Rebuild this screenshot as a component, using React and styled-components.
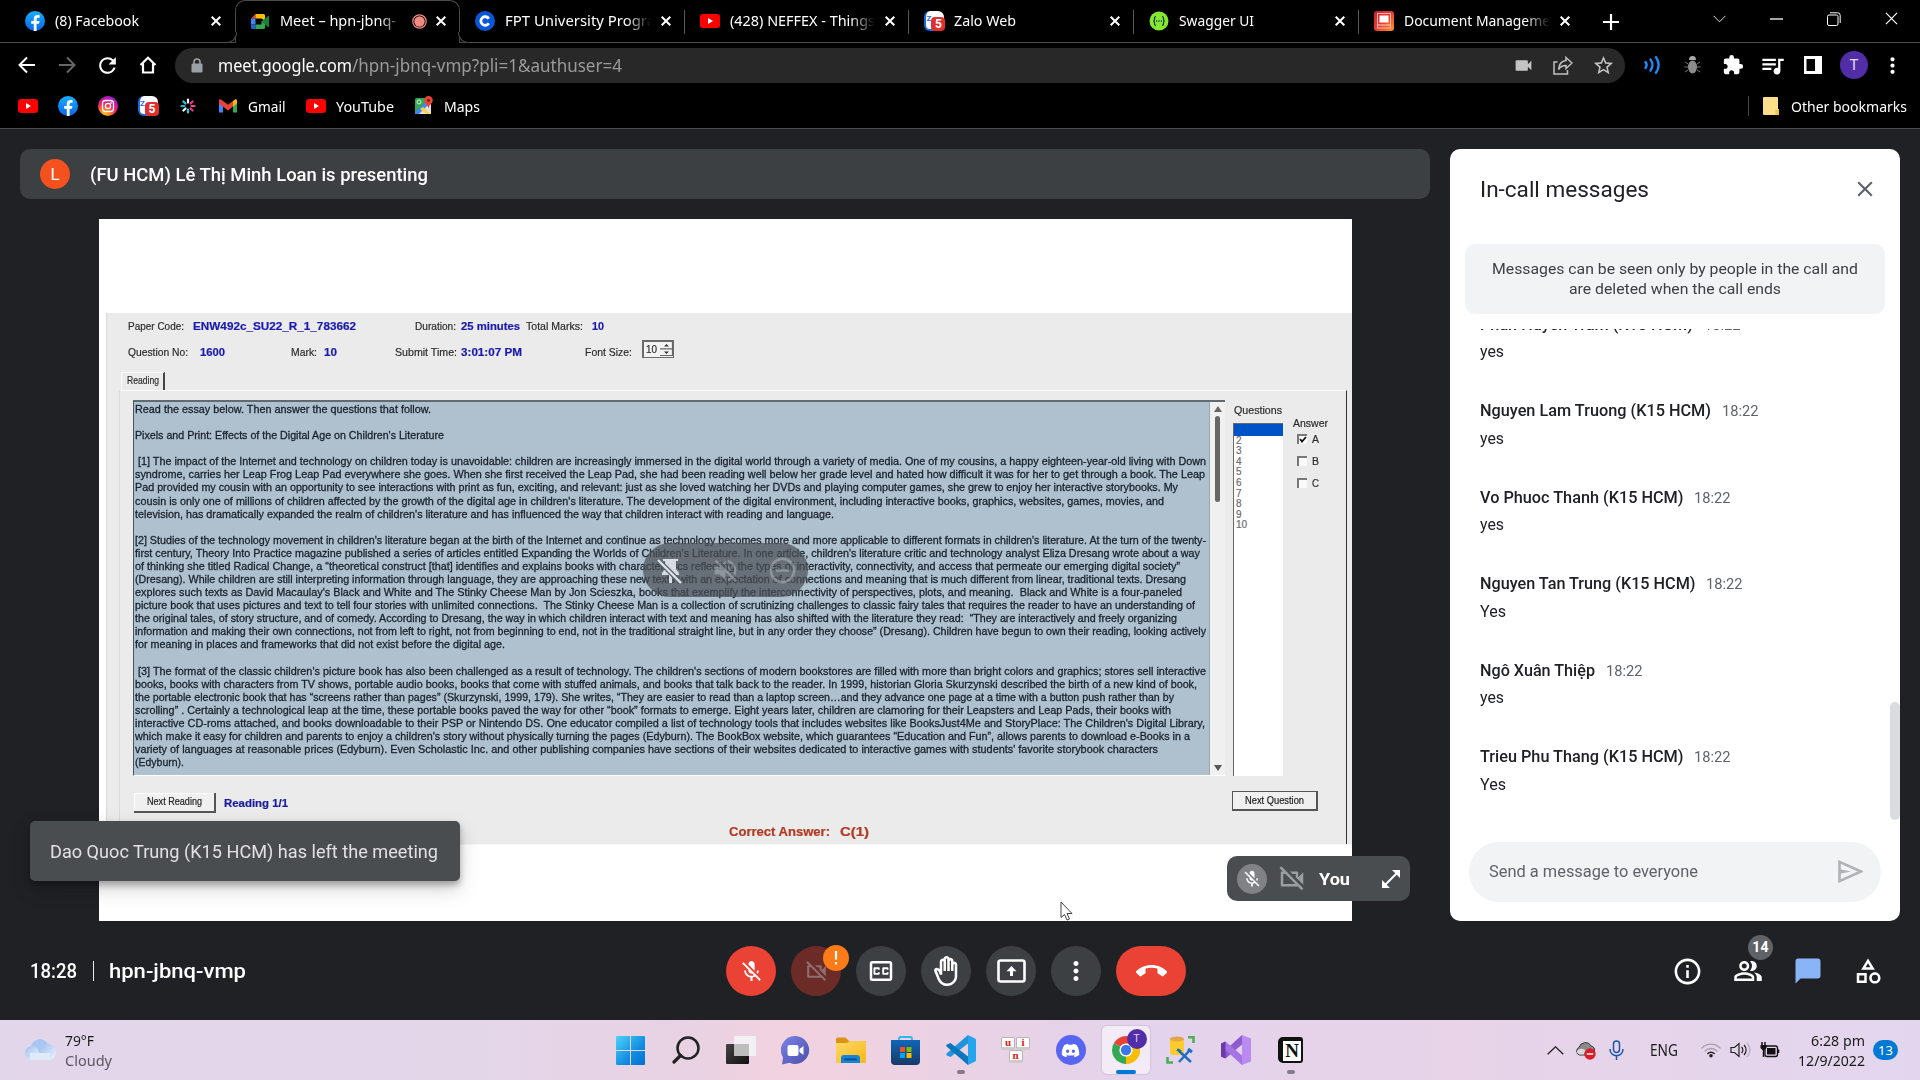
import React, { useLayoutEffect, useRef, useState } from "react";
import styled, { createGlobalStyle, css } from "styled-components";
import {
  MdMicOff, MdOutlineVideocamOff, MdOutlineClosedCaption, MdMoreVert, MdCallEnd, MdInfoOutline,
  MdOutlinePeopleAlt, MdChatBubble, MdOutlineCategory, MdExtension, MdQueueMusic, MdClose,
  MdStarBorder, MdVideocam, MdOpenInFull, MdRefresh, MdOutlineBackHand,
  MdVolumeOff, MdRemoveCircleOutline,
} from "react-icons/md";
import { FaDiscord } from "react-icons/fa";

const GlobalStyle = createGlobalStyle`
  * { box-sizing: border-box; }
  html, body { margin: 0; padding: 0; background: #202124; overflow: hidden; }
  svg { display: block; flex: none; }
`;

const ui = `"Noto Sans", "Open Sans", sans-serif`;
const roboto = `Roboto, "Noto Sans", sans-serif`;
const arial = `"Liberation Sans", Arial, sans-serif`;

/* ---------- text set to a known width ---------- */
const FitBox = styled.span`
  display: inline-block;
  flex: none;
  width: ${(p) => p.$w}px;
  margin-left: ${(p) => p.$ml || 0}px;
  white-space: pre;
  font-weight: ${(p) => (p.$bold ? 700 : "inherit")};
  color: ${(p) => p.$color || "inherit"};
`;
const FitInner = styled.span`
  display: inline-block;
  transform-origin: 0 50%;
`;
function Fit({ w, ml, bold, color, children }) {
  const ref = useRef(null);
  const [scale, setScale] = useState(1);
  useLayoutEffect(() => {
    const natural = parseFloat(getComputedStyle(ref.current).width);
    if (natural) setScale(w / natural);
  }, [w]);
  return (
    <FitBox $w={w} $ml={ml} $bold={bold} $color={color}>
      <FitInner ref={ref} style={{ transform: `scaleX(${scale})` }}>{children}</FitInner>
    </FitBox>
  );
}

/* ---------- shell ---------- */
const Screen = styled.div`
  width: 1920px;
  height: 1080px;
  display: flex;
  flex-direction: column;
  overflow: hidden;
  position: relative;
  background: #202124;
  font-family: ${ui};
`;

/* ---------- browser ---------- */
const Browser = styled.header`
  height: 129px;
  background: #000;
  color: #fff;
  border-bottom: 1px solid #4a4a4a;
  display: flex;
  flex-direction: column;
`;
const TabStrip = styled.div`
  height: 43px;
  display: flex;
  padding-left: 10px;
  box-shadow: inset 0 -1px 0 #4b4b4b;
`;
const Tab = styled.div`
  width: 224.85px;
  height: 43px;
  display: flex;
  align-items: center;
  padding: 0 9px 1px 15px;
  position: relative;
  font-size: 15px;
  ${(p) => p.$sep && css`
    &::after { content: ""; position: absolute; right: 0; top: 10px; width: 1px; height: 24px; background: #5a5a5a; }
  `}
  ${(p) => p.$active && css`
    background: #000;
    border: 1px solid #4b4b4b;
    border-bottom: 0;
    border-radius: 10px 10px 0 0;
    padding: 0 8px 2px 14px;
    &::before, &::after {
      content: ""; position: absolute; bottom: 0; width: 10px; height: 10px; background: #000;
      border-bottom: 1px solid #4b4b4b;
    }
    &::before { left: -10px; border-right: 1px solid #4b4b4b; border-bottom-right-radius: 10px; }
    &::after { right: -10px; border-left: 1px solid #4b4b4b; border-bottom-left-radius: 10px; }
  `}
`;
const TabTitle = styled.div`
  flex: 1;
  overflow: hidden;
  margin: 0 4px 0 10px;
  height: 24px;
  line-height: 22px;
  ${(p) => p.$fade && css`mask-image: linear-gradient(90deg, #000 calc(100% - 26px), transparent calc(100% - 1px));`}
`;
const TabClose = styled.div`
  width: 20px;
  display: flex;
  justify-content: center;
`;
const NewTab = styled.div`
  width: 54px;
  display: flex;
  align-items: center;
  justify-content: center;
`;
const WindowButtons = styled.div`
  margin-left: auto;
  display: flex;
  height: 37px;
  align-items: center;
  & > div { width: 57.3px; display: flex; justify-content: center; }
`;
const Toolbar = styled.div`
  height: 44px;
  display: flex;
  align-items: center;
  padding: 0 4px 0 7px;
`;
const ToolIcon = styled.div`
  width: ${(p) => p.$w || 40}px;
  flex: none;
  display: flex;
  justify-content: center;
  color: ${(p) => p.$c || "#fff"};
`;
const Omnibox = styled.div`
  width: 1450px;
  flex: none;
  height: 35px;
  border-radius: 18px;
  background: #282828;
  display: flex;
  align-items: center;
  padding: 0 2px 0 13px;
  font-size: 17.5px;
`;
const Grow = styled.div`flex: 1;`;
const Profile = styled.div`
  width: 28px;
  height: 28px;
  border-radius: 50%;
  background: #512da8;
  color: #e4dcf5;
  font: 15px/28px ${roboto};
  text-align: center;
`;
const Bookmarks = styled.div`
  height: 38px;
  display: flex;
  align-items: center;
  font-size: 15px;
  padding: 0 13px 0 18px;
`;
const Mark = styled.div`
  display: flex;
  align-items: center;
  margin-right: ${(p) => p.$mr}px;
`;
const MarkText = styled.div`
  display: flex;
  padding-bottom: 1px;
`;
const BarSep = styled.div`
  width: 1px;
  height: 20px;
  background: #4a4a4a;
  margin-right: 14px;
`;

/* ---------- meet ---------- */
const Meet = styled.main`
  height: 891px;
  display: flex;
  flex-direction: column;
  position: relative;
  background: #202124;
  font-family: ${roboto};
`;
const MeetTop = styled.div`
  display: flex;
  gap: 20px;
  padding: 20px 20px 0;
  height: 792px;
`;
const StageColumn = styled.div`
  width: 1410px;
  display: flex;
  flex-direction: column;
`;
const Presenter = styled.div`
  height: 50px;
  border-radius: 10px;
  background: #3c4043;
  color: #fff;
  display: flex;
  align-items: center;
  padding-left: 20px;
  font-size: 18px;
  font-weight: 500;
`;
const PresenterAvatar = styled.div`
  width: 30px;
  height: 30px;
  border-radius: 50%;
  background: #f4511e;
  font: 17px/30px ${roboto};
  text-align: center;
`;
const Slide = styled.div`
  margin: 20px 0 0 79px;
  width: 1253px;
  height: 702px;
  background: #fff;
  padding: 94px 0 0 7px;
  position: relative;
`;
const Exam = styled.div`
  height: 532px;
  background: #ebebeb;
  font-family: ${arial};
  color: #2c2c2c;
  font-size: 11.5px;
  border-left: 1px solid #d9d9d9;
  border-bottom: 1px solid #f6f6f6;
  -webkit-text-stroke: 0.2px;
`;
const InfoRow = styled.div`
  height: 26px;
  display: flex;
  align-items: center;
  padding-left: 21px;
`;
const Spinner = styled.div`
  width: 32px;
  height: 18px;
  margin: -7px 0 0 10px;
  border: 1px solid #6b6b6b;
  border-width: 2px 1px 1px 2px;
  background: #f3f3f3;
  display: flex;
  align-items: center;
  gap: 3px;
  padding-left: 2px;
`;
const ExamTab = styled.div`
  margin: 7px 0 0 14px;
  width: 44px;
  height: 18px;
  border-right: 2px solid #454545;
  border-left: 1px solid #fafafa;
  border-top: 1px solid #fafafa;
  padding: 1px 0 0 5px;
  line-height: 13px;
  font-size: 10.5px;
`;
const TabPage = styled.div`
  margin-left: 12px;
  width: 1228px;
  height: 454px;
  border-top: 1px solid #fafafa;
  border-left: 1px solid #dadada;
  border-right: 1px solid #333;
  padding-top: 9px;
`;
const ExamBody = styled.div`
  display: flex;
  height: 376px;
  padding-left: 13px;
`;
const Essay = styled.div`
  width: 1092px;
  border-top: 2px solid #5e6a74;
  border-left: 1px solid #4a545c;
  border-bottom: 1px solid #fff;
  background: #afc0cf;
  display: flex;
  color: #17222c;
`;
const EssayText = styled.div`
  flex: 1;
  padding: 1px 0 0 1px;
  -webkit-text-stroke: 0.3px #17222c;
`;
const EssayLine = styled.div`
  height: 13.08px;
  line-height: 13px;
  white-space: pre;
`;
const EssayScroll = styled.div`
  width: 16px;
  background: #f0f0f0;
  border-left: 1px solid #9aa6b0;
  display: flex;
  flex-direction: column;
  align-items: center;
  padding: 4px 0;
`;
const EssayThumb = styled.div`
  width: 5px;
  height: 86px;
  margin: 4px 0 auto;
  border-radius: 3px;
  background: #666;
`;
const QuestionColumn = styled.div`
  width: 50px;
  margin-left: 8px;
  padding-top: 4px;
  line-height: 13px;
  font-size: 11px;
  display: flex;
  flex-direction: column;
  gap: 6px;
`;
const QuestionList = styled.div`
  flex: 1;
  background: #fff;
  border-top: 1px solid #6a6a6a;
  border-left: 1px solid #6a6a6a;
  font-size: 10px;
  color: #6d6d6d;
`;
const QuestionItem = styled.div`
  height: ${(p) => (p.$on ? 11.6 : 10.6)}px;
  line-height: 10.6px;
  padding-left: 2px;
  background: ${(p) => (p.$on ? "#0053c6" : "transparent")};
`;
const AnswerColumn = styled.div`
  margin-left: 10px;
  padding-top: 17px;
  font-size: 11px;
`;
const AnswerTitle = styled.div`height: 11px; line-height: 13px;`;
const Option = styled.div`
  height: 22px;
  display: flex;
  align-items: center;
  padding-left: 4px;
  gap: 5px;
`;
const Check = styled.div`
  width: 10px;
  height: 10px;
  margin-top: -1px;
  background: #fafafa;
  border-top: 2px solid #777;
  border-left: 2px solid #777;
`;
const ExamFooter = styled.div`
  display: flex;
  height: 49px;
  padding: 15px 0 0 14px;
  align-items: flex-start;
`;
const WinButton = styled.div`
  width: ${(p) => p.$w}px;
  height: 20px;
  margin-top: ${(p) => p.$mt || 0}px;
  background: #f0f0f0;
  border: solid #555;
  border-width: ${(p) => (p.$focus ? "1px 2px 2px 1px" : "0 2px 2px 0")};
  ${(p) => !p.$focus && css`box-shadow: inset 1px 1px 0 #fff;`}
  display: flex;
  justify-content: center;
  line-height: 17px;
  font-size: 10.5px;
  color: #222;
`;
const ReadingCount = styled.div`
  margin: 3px auto 0 8px;
  line-height: 18px;
  color: #1a1a9e;
`;
const CorrectAnswer = styled.div`
  height: 15px;
  padding-left: 609px;
  line-height: 15px;
  font-size: 12px;
  color: #b33a22;
`;

const ReactionPill = styled.div`
  position: absolute;
  left: 544px;
  top: 324px;
  width: 165px;
  height: 54px;
  border-radius: 27px;
  background: rgba(75, 80, 86, 0.72);
  display: flex;
  align-items: center;
  padding-left: 14px;
  gap: 27px;
  color: #d7dde2;
`;
const Faded = styled.div`opacity: 0.35;`;

/* ---------- chat panel ---------- */
const Panel = styled.aside`
  width: 450px;
  height: 772px;
  background: #fff;
  border-radius: 10px;
  display: flex;
  flex-direction: column;
  color: #202124;
`;
const PanelHead = styled.div`
  height: 95px;
  padding: 0 22px 15px 30px;
  display: flex;
  align-items: center;
  justify-content: space-between;
  font-size: 22px;
  color: #202124;
`;
const Notice = styled.div`
  margin: 0 15px;
  height: 70px;
  border-radius: 10px;
  background: #f1f3f4;
  display: flex;
  flex-direction: column;
  align-items: center;
  padding-top: 15px;
  font-size: 15px;
  line-height: 20px;
  color: #3c4043;
`;
const Messages = styled.div`
  height: 491px;
  margin-top: 15px;
  overflow: hidden;
  display: flex;
  justify-content: space-between;
`;
const MessageList = styled.div`
  margin-top: -16.5px;
  padding-left: 30px;
`;
const Message = styled.div`
  height: 86.6px;
  font-size: 16.25px;
  line-height: 24px;
`;
const MessageHead = styled.div`
  display: flex;
  font-weight: 500;
  height: 27.5px;
`;
const MessageTime = styled.span`
  margin-left: 10.5px;
  font-size: 15px;
  font-weight: 400;
  color: #5f6368;
`;
const MessageThumb = styled.div`
  width: 10px;
  height: 118px;
  margin-top: 373px;
  border-radius: 5px;
  background: #dadce0;
`;
const Composer = styled.div`
  margin: 22px 19px 0;
  height: 60px;
  border-radius: 30px;
  background: #f1f3f4;
  display: flex;
  align-items: center;
  justify-content: space-between;
  padding: 0 18px 1px 20px;
  color: #5f6368;
  font-size: 16.5px;
`;

/* ---------- call bar ---------- */
const CallBar = styled.div`
  height: 99px;
  display: flex;
  align-items: center;
  padding: 1px 37px 0 30px;
  color: #fff;
`;
const Clock = styled.div`
  width: 696px;
  display: flex;
  align-items: center;
  font-size: 20px;
  font-weight: 500;
`;
const ClockSep = styled.div`
  width: 1px;
  height: 20px;
  margin-left: 16px;
  background: #e8eaed;
`;
const Controls = styled.div`
  display: flex;
  gap: 15px;
`;
const Round = styled.div`
  width: ${(p) => p.$w || 50}px;
  height: 50px;
  border-radius: 25px;
  background: ${(p) => p.$bg || "#3c4043"};
  display: flex;
  align-items: center;
  justify-content: center;
  position: relative;
`;
const Alert = styled.div`
  position: absolute;
  left: 32px;
  top: -1px;
  width: 26px;
  height: 26px;
  border-radius: 50%;
  background: #fa7b17;
  display: flex;
  align-items: center;
  justify-content: center;
`;
const SideActions = styled.div`
  margin-left: auto;
  display: flex;
  gap: 30px;
`;
const SideAction = styled.div`
  position: relative;
  color: ${(p) => p.$c || "#fff"};
`;
const Count = styled.div`
  position: absolute;
  left: 15px;
  top: -21px;
  width: 25px;
  height: 25px;
  border-radius: 50%;
  background: #5f6368;
  font-size: 14px;
  font-weight: 700;
  line-height: 25px;
  text-align: center;
  letter-spacing: 0.3px;
`;

const Toast = styled.div`
  position: absolute;
  left: 30px;
  top: 692px;
  width: 430px;
  height: 60px;
  border-radius: 5px;
  background: #4a4d50;
  color: #dfe1e5;
  font-size: 18px;
  line-height: 61px;
  padding-left: 20px;
  box-shadow: 0 4px 6px rgba(0, 0, 0, 0.28), 0 8px 20px rgba(0, 0, 0, 0.18);
`;
const SelfView = styled.div`
  position: absolute;
  left: 1227px;
  top: 727px;
  width: 183px;
  height: 45px;
  border-radius: 10px;
  background: #4a4d50;
  display: flex;
  align-items: center;
  padding-left: 10px;
  color: #fff;
  font-size: 17px;
  font-weight: 700;
`;
const SelfMic = styled.div`
  width: 30px;
  height: 30px;
  border-radius: 50%;
  background: #808285;
  display: flex;
  align-items: center;
  justify-content: center;
`;
const SelfCam = styled.div`
  margin: 0 12px 0 10px;
  color: #9b9ea1;
`;
const Expand = styled.div`margin-left: 29px;`;
const Cursor = styled.div`
  position: absolute;
  left: 1060px;
  top: 772px;
`;

/* ---------- taskbar ---------- */
const Taskbar = styled.footer`
  height: 60px;
  background: linear-gradient(90deg, #e2d6ea 0%, #e4d6e9 25%, #e8d2e3 36%, #f2d2df 41%, #ead2e4 50%, #e3d3ec 60%, #e8d3e8 76%, #e2d6ee 100%);
  display: flex;
  align-items: center;
  color: #1b1b1b;
`;
const Weather = styled.div`
  width: 603px;
  padding-left: 24px;
  display: flex;
  align-items: center;
  gap: 8px;
`;
const TwoLines = styled.div`
  display: flex;
  flex-direction: column;
  align-items: ${(p) => p.$align || "flex-start"};
  font-size: 15px;
  line-height: 20px;
  padding-bottom: 1px;
`;
const Apps = styled.div`display: flex;`;
const AppSlot = styled.div`
  width: 55px;
  height: 60px;
  display: flex;
  align-items: center;
  justify-content: center;
  position: relative;
`;
const AppTile = styled.div`
  width: 48px;
  height: 48px;
  border-radius: 5px;
  display: flex;
  align-items: center;
  justify-content: center;
  position: relative;
  ${(p) => p.$on && css`background: rgba(255, 255, 255, 0.55); box-shadow: 0 0 0 1px rgba(160, 140, 170, 0.22);`}
`;
const Running = styled.div`
  position: absolute;
  bottom: 6px;
  left: 50%;
  width: ${(p) => (p.$on ? 20 : 8)}px;
  margin-left: ${(p) => (p.$on ? -10 : -4)}px;
  height: 4px;
  border-radius: 2px;
  background: ${(p) => (p.$on ? "#0078d4" : "#847c8a")};
`;
const AppBadge = styled.div`
  position: absolute;
  right: 3px;
  top: 3px;
  width: 20px;
  height: 20px;
  border-radius: 50%;
  background: #512da8;
  color: #d9cdf0;
  font: 11px/20px ${roboto};
  text-align: center;
`;
const Tray = styled.div`
  margin-left: auto;
  display: flex;
  align-items: center;
  padding-right: 22px;
`;
const TrayItem = styled.div`
  width: ${(p) => p.$w}px;
  display: flex;
  justify-content: center;
`;
const NotifyCount = styled.div`
  margin-left: 8px;
  width: 25px;
  height: 20px;
  border-radius: 10px;
  background: #0078d4;
  color: #fff;
  font-size: 13px;
  line-height: 20px;
  text-align: center;
`;

/* ---------- drawings ---------- */
const FacebookLogo = () => (
  <svg width="20" height="20" viewBox="0 0 20 20">
    <defs><linearGradient id="fb" x1="0" y1="0" x2="0" y2="1"><stop offset="0" stopColor="#19aeff" /><stop offset="1" stopColor="#0866e8" /></linearGradient></defs>
    <circle cx="10" cy="10" r="10" fill="url(#fb)" />
    <path d="M11.6 20v-7.200h2.400l.5-2.800h-2.900V8.300c0-.9.4-1.500 1.600-1.500h1.400V4.300c-.5-.1-1.300-.2-2-.2-2.300 0-3.800 1.300-3.800 3.700V10H6.200v2.800h2.600V20z" fill="#fff" />
  </svg>
);
const YoutubeLogo = () => (
  <svg width="20" height="20" viewBox="0 0 20 20">
    <rect x="0" y="3" width="20" height="14" rx="3" fill="#f00" /><path d="M8 7v6l5-3z" fill="#fff" />
  </svg>
);
const MeetLogo = () => (
  <svg width="20" height="20" viewBox="0 0 20 20">
    <path d="M1 7.500L5.500 3v4.500z" fill="#ea4335" /><path d="M1 7.500h4.500v6H1z" fill="#4285f4" />
    <path d="M1 13.500h4.500V18H2.500A1.500 1.500 0 0 1 1 16.500z" fill="#1967d2" />
    <path d="M5.500 3h8A1.500 1.500 0 0 1 15 4.500V10l-3.500-2.500h-6z" fill="#fbbc04" />
    <path d="M5.500 13.500h6V10H15v6.500a1.500 1.500 0 0 1-1.500 1.500h-8z" fill="#34a853" />
    <path d="M11.500 10.500L18 5c.5-.4 1-.2 1 .5v10c0 .7-.5.9-1 .5z" fill="#188038" />
  </svg>
);
const CourseraLogo = () => (
  <svg width="20" height="20" viewBox="0 0 20 20"><circle cx="10" cy="10" r="10" fill="#0a56d8" /><path d="M13.800 12.300A4.300 4.300 0 1 1 13.800 7.700" fill="none" stroke="#fff" strokeWidth="2.800" /></svg>
);
const BadgeDigit = styled.div`
  position: absolute;
  right: 0;
  bottom: 0;
  width: 14px;
  height: 14px;
  border-radius: 4px;
  background: #df2f2f;
  color: #fff;
  font: 700 12px/14px ${roboto};
  text-align: center;
`;
const ZaloTile = styled.div`
  position: relative;
  width: 20px;
  height: 20px;
  border-radius: 6px;
  background: #fff;
  border-left: 2px solid #1a6ae8;
  border-bottom: 2px solid #1a6ae8;
  color: #1a6ae8;
  font: 700 8px/16px ${roboto};
  & > ${BadgeDigit} { right: -1px; bottom: -2px; }
`;
const ZaloLogo = () => <ZaloTile>Z<BadgeDigit>5</BadgeDigit></ZaloTile>;
const SwaggerLogo = () => (
  <svg width="20" height="20" viewBox="0 0 20 20">
    <circle cx="10" cy="10" r="9.500" fill="#85ea2d" />
    <path d="M7 5.500c-1.500 0-1.500 1-1.500 2.200S5.200 10 4.300 10c.9 0 1.200 1 1.200 2.300S5.500 14.500 7 14.500M13 5.500c1.500 0 1.500 1 1.500 2.200s.3 2.300 1.200 2.300c-.9 0-1.200 1-1.200 2.300s0 2.200-1.500 2.200" fill="none" stroke="#173647" strokeWidth="1.200" />
    <circle cx="7.600" cy="10" r=".8" fill="#173647" /><circle cx="10" cy="10" r=".8" fill="#173647" /><circle cx="12.400" cy="10" r=".8" fill="#173647" />
  </svg>
);
const DocumentLogo = () => (
  <svg width="20" height="20" viewBox="0 0 20 20">
    <defs><linearGradient id="dl" x1="0" y1="0" x2="1" y2="1"><stop offset="0" stopColor="#c8202c" /><stop offset=".5" stopColor="#ee3a32" /><stop offset="1" stopColor="#ff9a1e" /></linearGradient></defs>
    <rect width="20" height="20" rx="3" fill="url(#dl)" />
    <rect x="3.500" y="2.500" width="13" height="14.500" fill="none" stroke="#ffb9b0" strokeWidth="1" /><rect x="5.500" y="4.500" width="9" height="7" fill="#fff" /><path d="M3.500 14h13" stroke="#ffd0c8" />
  </svg>
);
const InstagramLogo = () => (
  <svg width="20" height="20" viewBox="0 0 20 20">
    <defs><radialGradient id="ig" cx=".3" cy="1" r="1.100"><stop offset="0" stopColor="#ffd42e" /><stop offset=".3" stopColor="#ff7a1a" /><stop offset=".6" stopColor="#f01a78" /><stop offset="1" stopColor="#8a1fe0" /></radialGradient></defs>
    <circle cx="10" cy="10" r="10" fill="url(#ig)" />
    <rect x="4.500" y="4.500" width="11" height="11" rx="3" fill="none" stroke="#fff" strokeWidth="1.300" /><circle cx="10" cy="10" r="2.600" fill="none" stroke="#fff" strokeWidth="1.300" /><circle cx="13.100" cy="6.900" r=".8" fill="#fff" />
  </svg>
);
const BurstLogo = () => (
  <svg width="16" height="16" viewBox="0 0 16 16" strokeWidth="2.200" strokeLinecap="round">
    {["#fff", "#e9369c", "#ff4d6a", "#e9369c", "#27d3c8", "#fff", "#22b8d8", "#2ad4d0"].map((c, i) => (
      <path key={i} d="M8 1.500v3" stroke={c} transform={`rotate(${i * 45} 8 8)`} />
    ))}
  </svg>
);
const GmailLogo = () => (
  <svg width="18" height="20" viewBox="0 0 18 20">
    <path d="M0 5v11.500h4V8z" fill="#4285f4" /><path d="M18 5v11.500h-4V8z" fill="#34a853" />
    <path d="M14 5l2-1.500c1.200-.8 2 0 2 1.300v2.700L14 10.500z" fill="#fbbc04" />
    <path d="M0 4.800c0-1.300 1-2.100 2-1.300l7 5.300 5-3.800v5.500l-5 4-9-7z" fill="#ea4335" />
  </svg>
);
const MapsLogo = () => (
  <svg width="18" height="20" viewBox="0 0 18 20">
    <rect x="0" y="2" width="16" height="16" rx="1.500" fill="#34a853" /><path d="M1 18L16 6v12z" fill="#dfe3e8" /><path d="M0 16L11 6l3 2L4 18H0z" fill="#4285f4" /><path d="M8 11l8 7h-5l-6-5z" fill="#fbd34c" />
    <path d="M13.500 0a4.300 4.300 0 0 1 4.300 4.300c0 3-3.300 4-4.300 8.200-1-4.200-4.300-5.200-4.300-8.200A4.300 4.300 0 0 1 13.500 0z" fill="#ea4335" /><circle cx="13.500" cy="4.300" r="1.500" fill="#811b13" /><circle cx="4" cy="6" r="2" fill="none" stroke="#d6f0dc" />
  </svg>
);
const Cross = ({ s = 10, w = 2, c = "#fff" }) => (
  <svg width={s} height={s} viewBox="0 0 10 10"><path d="M.7.7l8.600 8.600M9.300.7L.7 9.300" stroke={c} strokeWidth={(w * 10) / s} /></svg>
);
const Arrow = ({ flip, c = "#fff" }) => (
  <svg width="18" height="18" viewBox="0 0 18 18"><path d="M17 9H2M9 1.500L1.500 9 9 16.500" fill="none" stroke={c} strokeWidth="2" transform={flip ? "rotate(180 9 9)" : undefined} /></svg>
);
const LockIcon = () => (
  <svg width="12" height="15" viewBox="0 0 12 15"><path d="M3 7V4a3 3 0 0 1 6 0v3" fill="none" stroke="#9aa0a6" strokeWidth="1.600" /><rect x=".5" y="5.500" width="11" height="9" rx="1.200" fill="#9aa0a6" /></svg>
);
const SendIcon = () => (
  <svg width="25" height="23" viewBox="0 0 25 23"><path d="M1.500 1.900v19.200L23 11.500z" fill="none" stroke="#b0b2b5" strokeWidth="2.600" /><path d="M2 9.300l11 2.200-11 2.200z" fill="#b0b2b5" /></svg>
);
const WindowsLogo = () => (
  <svg width="29" height="29" viewBox="0 0 29 29">
    <defs><linearGradient id="wn" x1="0" y1="0" x2="1" y2="1"><stop offset="0" stopColor="#4fd3fb" /><stop offset=".6" stopColor="#128ce0" /><stop offset="1" stopColor="#0070cf" /></linearGradient></defs>
    <path d="M0 1a1 1 0 0 1 1-1h13v14H0zM15 0h13a1 1 0 0 1 1 1v13H15zM0 15h14v14H1a1 1 0 0 1-1-1zM15 15h14v13a1 1 0 0 1-1 1H15z" fill="url(#wn)" />
  </svg>
);
const SearchLogo = () => (
  <svg width="28" height="28" viewBox="0 0 28 28" fill="none" stroke="#222" strokeLinecap="round"><circle cx="16" cy="12" r="10.500" strokeWidth="2.500" /><path d="M8.500 19.500L2 26" strokeWidth="3.200" /></svg>
);
const TaskViewLogo = () => (
  <svg width="30" height="28" viewBox="0 0 30 28">
    <defs><linearGradient id="tv" x1="0" y1="0" x2="1" y2="1"><stop offset="0" stopColor="#444" /><stop offset="1" stopColor="#111" /></linearGradient></defs>
    <rect y="8" width="23" height="20" rx="1" fill="url(#tv)" /><rect x="8" width="22" height="20" rx="1" fill="#f3f1f4" fillOpacity=".94" /><path d="M8 8h15v12H8z" fill="#bdbdbd" />
  </svg>
);
const TeamsChatLogo = () => (
  <svg width="29" height="29" viewBox="0 0 29 29">
    <defs><linearGradient id="tc" x1="0" y1="0" x2="1" y2="1"><stop offset="0" stopColor="#7b83eb" /><stop offset="1" stopColor="#4a4ea8" /></linearGradient></defs>
    <path d="M14.500 0a14 14 0 1 1-6 26.800L1 28.500l1-7A14.200 14.200 0 0 1 14.500 0z" fill="url(#tc)" /><rect x="6.500" y="9" width="11" height="11" rx="2" fill="#fff" /><path d="M18.500 13l4-3v9l-4-3z" fill="#fff" />
  </svg>
);
const ExplorerLogo = () => (
  <svg width="30" height="26" viewBox="0 0 30 26">
    <defs><linearGradient id="ex" x1="0" y1="0" x2="1" y2="1"><stop offset="0" stopColor="#ffd868" /><stop offset="1" stopColor="#fbb917" /></linearGradient></defs>
    <path d="M0 2a1.500 1.500 0 0 1 1.500-1.500h8L13 4H28.500A1.500 1.500 0 0 1 30 5.500V12H0z" fill="#d99412" /><path d="M0 6h11l3-2h14.500A1.500 1.500 0 0 1 30 5.500v19a1.500 1.500 0 0 1-1.500 1.500h-27A1.500 1.500 0 0 1 0 24.500z" fill="url(#ex)" />
    <path d="M5 26v-5a3 3 0 0 1 3-3h13a3 3 0 0 1 3 3v5z" fill="#1583d6" /><rect x="8" y="21.500" width="13" height="1.800" rx=".9" fill="#0a4c8f" />
  </svg>
);
const StoreLogo = () => (
  <svg width="29" height="29" viewBox="0 0 29 29">
    <defs><linearGradient id="st" x1="0" y1="0" x2="0" y2="1"><stop offset="0" stopColor="#0d67b8" /><stop offset="1" stopColor="#173a66" /></linearGradient></defs>
    <path d="M8 5V2.500A1.500 1.500 0 0 1 9.500 1h10A1.500 1.500 0 0 1 21 2.500V5" fill="none" stroke="#2fb8f2" strokeWidth="1.800" /><path d="M0 4h29v21a4 4 0 0 1-4 4H4a4 4 0 0 1-4-4z" fill="url(#st)" />
    <path d="M9 11h5v5H9z" fill="#f25022" /><path d="M15.500 11h5v5h-5z" fill="#7fba00" /><path d="M9 17h5v5H9z" fill="#00a4ef" /><path d="M15.500 17h5v5h-5z" fill="#ffb900" />
  </svg>
);
const CodeLogo = () => (
  <svg width="30" height="30" viewBox="0 0 30 30">
    <path d="M22 0l7 3.400c.6.300 1 .9 1 1.600v20c0 .7-.4 1.300-1 1.600L22 30z" fill="#25a5ee" /><path d="M22 0v8.500L4.500 22 1 20.500a1.200 1.200 0 0 1-.4-2z" fill="#1d94dc" /><path d="M22 30v-8.500L4.500 8 1 9.500a1.200 1.200 0 0 0-.4 2z" fill="#0b76be" />
  </svg>
);
const Keys = styled.div`
  width: 30px;
  display: flex;
  flex-wrap: wrap;
  justify-content: center;
  gap: 0 1px;
`;
const Key = styled.div`
  width: 14px;
  height: 13px;
  border-radius: 2px;
  background: #fdfdfd;
  border: 1px solid #b9b4b4;
  border-bottom: 3px solid #cfcaca;
  color: #e01818;
  font: 700 11px/8px "Liberation Serif", serif;
  text-align: center;
`;
const DiscordTile = styled.div`
  width: 30px;
  height: 30px;
  border-radius: 50%;
  background: #5865f2;
  color: #fff;
  display: flex;
  align-items: center;
  justify-content: center;
`;
const ChromeLogo = () => (
  <svg width="28" height="28" viewBox="0 0 28 28">
    <path d="M14 14L1.900 7A14 14 0 0 1 26.100 7z" fill="#ea4335" /><path d="M14 14L26.100 7A14 14 0 0 1 14 28z" fill="#fbbc04" /><path d="M14 14v14A14 14 0 0 1 1.900 7z" fill="#34a853" /><path d="M14 7.500h12.400A14 14 0 0 1 14 28l5.500-10z" fill="#fbbc04" />
    <circle cx="14" cy="14" r="6.600" fill="#fff" /><circle cx="14" cy="14" r="5.200" fill="#3b78e7" />
  </svg>
);
const DataToolsLogo = () => (
  <svg width="29" height="28" viewBox="0 0 29 28">
    <path d="M22 1.300h5.500V7M1.500 21v5.500H7" fill="none" stroke="#4caf50" strokeWidth="2.600" />
    <path d="M4 3v14c0 3 14 3 14 0V3z" fill="#fccb2e" /><ellipse cx="11" cy="3" rx="7" ry="2.600" fill="#e0a54a" />
    <path d="M13 15l12 11M24 14L13 26" stroke="#1a6fc0" strokeWidth="2.400" /><path d="M11 13.500l4 2M22 13l4 3" stroke="#1a6fc0" strokeWidth="3" />
  </svg>
);
const StudioLogo = () => (
  <svg width="30" height="30" viewBox="0 0 30 30">
    <path d="M21 0l9 3.500v23L21 30z" fill="#b98af0" /><path d="M21 0v9.500L4.500 23.500 0 21.500V19z" fill="#8e5bd0" /><path d="M21 30v-9.500L4.500 6.500 0 8.500V11z" fill="#a574e4" /><path d="M0 8.500L4.500 6.500v17L0 21.500z" fill="#6b3aa4" />
  </svg>
);
const NotionTile = styled.div`
  width: 25px;
  height: 26px;
  border: 2px solid #111;
  border-left-width: 5px;
  border-top-width: 4px;
  border-radius: 5px 3px 3px 5px;
  background: #fff;
  color: #111;
  font: 700 19px/20px "Liberation Serif", serif;
  text-align: center;
`;
const Cloud = () => (
  <svg width="33" height="24" viewBox="0 0 33 24">
    <defs><linearGradient id="cl" x1="0" y1="0" x2="1" y2="1"><stop offset="0" stopColor="#9bbdf0" /><stop offset="1" stopColor="#f2f6fc" /></linearGradient></defs>
    <circle cx="16" cy="10" r="9" fill="#a9c6f2" /><circle cx="8" cy="15" r="7" fill="url(#cl)" /><circle cx="24" cy="14" r="8" fill="url(#cl)" /><rect x="6" y="15" width="20" height="7" fill="#dfe9f8" />
  </svg>
);

/* ---------- data ---------- */
const tabs = [
  { icon: <FacebookLogo />, title: "(8) Facebook", w: 84 },
  { icon: <MeetLogo />, title: "Meet – hpn-jbnq-", w: 116, active: true, fade: true },
  { icon: <CourseraLogo />, title: "FPT University Program", w: 164, sep: true, fade: true },
  { icon: <YoutubeLogo />, title: "(428) NEFFEX - Things", w: 145, sep: true, fade: true },
  { icon: <ZaloLogo />, title: "Zalo Web", w: 62, sep: true },
  { icon: <SwaggerLogo />, title: "Swagger UI", w: 75, sep: true },
  { icon: <DocumentLogo />, title: "Document Manageme", w: 146, fade: true },
];

const essay = [
  ["Read the essay below. Then answer the questions that follow.", 296],
  null,
  ["Pixels and Print: Effects of the Digital Age on Children's Literature", 309],
  null,
  [" [1] The impact of the Internet and technology on children today is unavoidable: children are increasingly immersed in the digital world through a variety of media. One of my cousins, a happy eighteen-year-old living with Down", 1071],
  ["syndrome, carries her Leap Frog Leap Pad everywhere she goes. When she first received the Leap Pad, she had been reading well below her grade level and hated how difficult it was for her to get through a book. The Leap", 1070],
  ["Pad provided my cousin with an opportunity to see interactions with print as fun, exciting, and relevant: just as she loved watching her DVDs and playing computer games, she grew to enjoy her interactive storybooks. My", 1043],
  ["cousin is only one of millions of children affected by the growth of the digital age in children's literature. The development of the digital environment, including interactive books, graphics, websites, games, movies, and", 1029],
  ["television, has dramatically expanded the realm of children's literature and has influenced the way that children interact with reading and language.", 699],
  null,
  ["[2] Studies of the technology movement in children's literature began at the birth of the Internet and continue as technology becomes more and more applicable to different formats in children's literature. At the turn of the twenty-", 1071],
  ["first century, Theory Into Practice magazine published a series of articles entitled Expanding the Worlds of Children's Literature. In one article, children's literature critic and technology analyst Eliza Dresang wrote about a way", 1065],
  ["of thinking she titled Radical Change, a “theoretical construct [that] identifies and explains books with characteristics reflecting the types of interactivity, connectivity, and access that permeate our emerging digital society”", 1045],
  ["(Dresang). While children are still interpreting information through language, they are approaching these new texts with an expectation of connections and meaning that is much different from linear, traditional texts. Dresang", 1051],
  ["explores such texts as David Macaulay's Black and White and The Stinky Cheese Man by Jon Scieszka, books that exemplify the interconnectivity of perspectives, plots, and meaning.  Black and White is a four-paneled", 1047],
  ["picture book that uses pictures and text to tell four stories with unlimited connections.  The Stinky Cheese Man is a collection of scrutinizing challenges to classic fairy tales that requires the reader to have an understanding of", 1060],
  ["the original tales, of story structure, and of comedy. According to Dresang, the way in which children interact with text and meaning has also shifted with the literature they read:  “They are interactively and freely organizing", 1042],
  ["information and making their own connections, not from left to right, not from beginning to end, not in the traditional straight line, but in any order they choose” (Dresang). Children have begun to own their reading, looking actively", 1071],
  ["for meaning in places and frameworks that did not exist before the digital age.", 370],
  null,
  [" [3] The format of the classic children's picture book has also been challenged as a result of technology. The children's sections of modern bookstores are filled with more than bright colors and graphics; stores sell interactive", 1071],
  ["books, books with characters from TV shows, portable audio books, books that come with stuffed animals, and books that talk back to the reader. In 1999, historian Gloria Skurzynski described the birth of a new kind of book,", 1062],
  ["the portable electronic book that has “screens rather than pages” (Skurzynski, 1999, 179). She writes, “They are easier to read than a laptop screen…and they advance one page at a time with a button push rather than by", 1039],
  ["scrolling” . Certainly a technological leap at the time, these portable books paved the way for other “book” formats to emerge. Eight years later, children are clamoring for their Leapsters and Leap Pads, their books with", 1036],
  ["interactive CD-roms attached, and books downloadable to their PSP or Nintendo DS. One educator compiled a list of technology tools that includes websites like BooksJust4Me and StoryPlace: The Children's Digital Library,", 1070],
  ["which make it easy for children and parents to enjoy a children's story without physically turning the pages (Edyburn). The BookBox website, which guarantees “Education and Fun”, allows parents to download e-Books in a", 1055],
  ["variety of languages at reasonable prices (Edyburn). Even Scholastic Inc. and other publishing companies have sections of their websites dedicated to interactive games with students' favorite storybook characters", 1023],
  ["(Edyburn).", 49],
];

const messages = [
  ["Phan Huyen Tram (K15 HCM)", 213, "yes", 24],
  ["Nguyen Lam Truong (K15 HCM)", 231, "yes", 24],
  ["Vo Phuoc Thanh (K15 HCM)", 203.500, "yes", 24],
  ["Nguyen Tan Trung (K15 HCM)", 215.500, "Yes", 26],
  ["Ngô Xuân Thiệp", 115, "yes", 24],
  ["Trieu Phu Thang (K15 HCM)", 203.500, "Yes", 26],
];

const apps = [
  { icon: <WindowsLogo /> },
  { icon: <SearchLogo /> },
  { icon: <TaskViewLogo /> },
  { icon: <TeamsChatLogo /> },
  { icon: <ExplorerLogo /> },
  { icon: <StoreLogo /> },
  { icon: <CodeLogo />, run: true },
  { icon: <Keys><Key>u</Key><Key>i</Key><Key>n</Key></Keys> },
  { icon: <DiscordTile><FaDiscord size={19} /></DiscordTile> },
  { icon: <ChromeLogo />, run: true, on: true },
  { icon: <DataToolsLogo /> },
  { icon: <StudioLogo /> },
  { icon: <NotionTile>N</NotionTile>, run: true },
];

const blue = "#1a1ab0";

function BrowserChrome() {
  return (
    <Browser>
      <TabStrip>
        {tabs.map((t) => (
          <Tab key={t.title} $active={t.active} $sep={t.sep}>
            {t.icon}
            <TabTitle $fade={t.fade}><Fit w={t.w}>{t.title}</Fit></TabTitle>
            {t.active && (
              <ToolIcon $w={22}>
                <svg width="15" height="15" viewBox="0 0 15 15"><circle cx="7.500" cy="7.500" r="6.700" fill="none" stroke="#f28b82" strokeWidth="1.200" /><circle cx="7.500" cy="7.500" r="5.200" fill="#f28b82" /></svg>
              </ToolIcon>
            )}
            <TabClose><Cross s={10} w={2} /></TabClose>
          </Tab>
        ))}
        <NewTab><svg width="16" height="16" viewBox="0 0 16 16"><path d="M8 0v16M0 8h16" stroke="#fff" strokeWidth="2.200" /></svg></NewTab>
        <WindowButtons>
          <div><svg width="13" height="8" viewBox="0 0 13 8"><path d="M.5.8l6 6 6-6" fill="none" stroke="#ddd" /></svg></div>
          <div><svg width="13" height="2"><path d="M0 1h13" stroke="#fff" strokeWidth="1.300" /></svg></div>
          <div><svg width="14" height="14" viewBox="0 0 14 14" fill="none" stroke="#fff"><rect x=".5" y="3" width="10.500" height="10.500" rx="1.500" /><path d="M3 .8h7.500a2.500 2.500 0 0 1 2.700 2.500V11" /></svg></div>
          <div><Cross s={13} w={1.200} /></div>
        </WindowButtons>
      </TabStrip>
      <Toolbar>
        <ToolIcon><Arrow /></ToolIcon>
        <ToolIcon $c="#666"><Arrow flip c="#666" /></ToolIcon>
        <ToolIcon $w={41}><MdRefresh size={25} /></ToolIcon>
        <ToolIcon><svg width="18" height="18" viewBox="0 0 18 18"><path d="M1.500 9L9 1.800 16.500 9M4 7.500v9h10v-9" fill="none" stroke="#fff" strokeWidth="2.200" /></svg></ToolIcon>
        <ToolIcon $w={7} />
        <Omnibox>
          <ToolIcon $w={18}><LockIcon /></ToolIcon>
          <Fit w={134} ml={12}>meet.google.com</Fit>
          <Fit w={270} color="#9a9a9a">/hpn-jbnq-vmp?pli=1&amp;authuser=4</Fit>
          <Grow />
          <ToolIcon $c="#c4c4c4"><MdVideocam size={21} /></ToolIcon>
          <ToolIcon $c="#c4c4c4">
            <svg width="20" height="19" viewBox="0 0 20 19" fill="none" stroke="#c0c0c0" strokeWidth="1.500"><path d="M4.500 6H1v12h13.500v-4" /><path d="M13 1.500l6 5.500-6 5.500V9.500c-4 0-6 1.500-7.500 4C6 8 8.500 5 13 4.500z" /></svg>
          </ToolIcon>
          <ToolIcon $c="#c4c4c4"><MdStarBorder size={23} /></ToolIcon>
        </Omnibox>
        <ToolIcon $w={54}><svg width="17" height="18" viewBox="0 0 17 18" fill="none" stroke="#1a8cff" strokeWidth="2.400" strokeLinecap="round"><path d="M1.500 6a5 5 0 0 1 0 6M6.500 3.500a9 9 0 0 1 0 11M12 1.200a13 13 0 0 1 0 15.600" /></svg></ToolIcon>
        <ToolIcon $w={27}>
          <svg width="17" height="20" viewBox="0 0 17 20"><path d="M5 5a3.500 4 0 0 1 7 0z" fill="#aaa" /><ellipse cx="8.500" cy="12" rx="4.500" ry="6.500" fill="#8c8c8c" /><path d="M4 9L1 7M4 12H.5M4 15l-3 2M13 9l3-2M13 12h3.500M13 15l3 2" stroke="#777" /></svg>
        </ToolIcon>
        <ToolIcon $w={53}><MdExtension size={22} /></ToolIcon>
        <ToolIcon $w={27}><MdQueueMusic size={27} /></ToolIcon>
        <ToolIcon $w={54}><svg width="18" height="18" viewBox="0 0 18 18"><path fillRule="evenodd" d="M0 0h18v18H0zM2.500 3v12H11V3z" fill="#fff" /></svg></ToolIcon>
        <Profile>T</Profile>
        <ToolIcon $w={48}><MdMoreVert size={25} /></ToolIcon>
      </Toolbar>
      <Bookmarks>
        <Mark $mr={20}><YoutubeLogo /></Mark>
        <Mark $mr={20}><FacebookLogo /></Mark>
        <Mark $mr={20}><InstagramLogo /></Mark>
        <Mark $mr={22}><ZaloLogo /></Mark>
        <Mark $mr={23}><BurstLogo /></Mark>
        <Mark $mr={20}><GmailLogo /><MarkText><Fit w={37.500} ml={11}>Gmail</Fit></MarkText></Mark>
        <Mark $mr={21}><YoutubeLogo /><MarkText><Fit w={58} ml={10}>YouTube</Fit></MarkText></Mark>
        <Mark $mr={0}><MapsLogo /><MarkText><Fit w={36} ml={11}>Maps</Fit></MarkText></Mark>
        <Grow />
        <BarSep />
        <svg width="17" height="18" viewBox="0 0 17 18"><path d="M0 1a1 1 0 0 1 1-1h13a1 1 0 0 1 1 1v11h1v6H1a1 1 0 0 1-1-1z" fill="#ffe08a" /><path d="M12.500 12.500H16V18h-3.500z" fill="#f3c64a" /></svg>
        <MarkText><Fit w={116} ml={11}>Other bookmarks</Fit></MarkText>
      </Bookmarks>
    </Browser>
  );
}

function ExamScreen() {
  return (
    <Exam>
      <InfoRow>
        <Fit w={56}>Paper Code:</Fit>
        <Fit w={163} ml={9} bold color={blue}>ENW492c_SU22_R_1_783662</Fit>
        <Fit w={41} ml={59}>Duration:</Fit>
        <Fit w={59} ml={5} bold color={blue}>25 minutes</Fit>
        <Fit w={57} ml={6}>Total Marks:</Fit>
        <Fit w={12} ml={9} bold color={blue}>10</Fit>
      </InfoRow>
      <InfoRow>
        <Fit w={60}>Question No:</Fit>
        <Fit w={25} ml={12} bold color={blue}>1600</Fit>
        <Fit w={26} ml={66}>Mark:</Fit>
        <Fit w={13} ml={7} bold color={blue}>10</Fit>
        <Fit w={62} ml={58}>Submit Time:</Fit>
        <Fit w={61} ml={4} bold color={blue}>3:01:07 PM</Fit>
        <Fit w={47} ml={63}>Font Size:</Fit>
        <Spinner>
          <Fit w={11}>10</Fit>
          <svg width="13" height="14" viewBox="0 0 13 14"><path d="M0 6.800h13M0 13.500h13M12.500 0v14" stroke="#666" strokeWidth="1.200" /><path d="M4 4.500h5L6.500 2zM4 9.500h5L6.500 12z" fill="#333" /></svg>
        </Spinner>
      </InfoRow>
      <ExamTab><Fit w={32}>Reading</Fit></ExamTab>
      <TabPage>
        <ExamBody>
          <Essay>
            <EssayText>
              {essay.map((line, i) => <EssayLine key={i}>{line && <Fit w={line[1]}>{line[0]}</Fit>}</EssayLine>)}
            </EssayText>
            <EssayScroll>
              <svg width="8" height="6"><path d="M0 6h8L4 0z" fill="#666" /></svg>
              <EssayThumb />
              <svg width="8" height="6"><path d="M0 0h8L4 6z" fill="#555" /></svg>
            </EssayScroll>
          </Essay>
          <QuestionColumn>
            <Fit w={48} ml={1}>Questions</Fit>
            <QuestionList>
              {[1, 2, 3, 4, 5, 6, 7, 8, 9, 10].map((n) => <QuestionItem key={n} $on={n === 1}>{n > 1 ? n : ""}</QuestionItem>)}
            </QuestionList>
          </QuestionColumn>
          <AnswerColumn>
            <AnswerTitle><Fit w={35}>Answer</Fit></AnswerTitle>
            {["A", "B", "C"].map((a) => (
              <Option key={a}>
                <Check>{a === "A" && <svg width="8" height="8" viewBox="0 0 8 8"><path d="M1 3l2 2.500L7 1" fill="none" stroke="#111" strokeWidth="1.800" /></svg>}</Check>
                <Fit w={7}>{a}</Fit>
              </Option>
            ))}
          </AnswerColumn>
        </ExamBody>
        <ExamFooter>
          <WinButton $w={82} $mt={2}><Fit w={55}>Next Reading</Fit></WinButton>
          <ReadingCount><Fit w={64} bold>Reading 1/1</Fit></ReadingCount>
          <WinButton $w={86} $focus><Fit w={59}>Next Question</Fit></WinButton>
          <ToolIcon $w={28} />
        </ExamFooter>
        <CorrectAnswer><Fit w={101} bold>Correct Answer:</Fit><Fit w={29} ml={10} bold>C(1)</Fit></CorrectAnswer>
      </TabPage>
    </Exam>
  );
}

function ChatPanel() {
  return (
    <Panel>
      <PanelHead><Fit w={169}>In-call messages</Fit><MdClose size={26} color="#5f6368" /></PanelHead>
      <Notice>
        <Fit w={366}>Messages can be seen only by people in the call and</Fit>
        <Fit w={212}>are deleted when the call ends</Fit>
      </Notice>
      <Messages>
        <MessageList>
          {messages.map(([name, w, text, tw]) => (
            <Message key={name}>
              <MessageHead><Fit w={w}>{name}</Fit><MessageTime><Fit w={36.500}>18:22</Fit></MessageTime></MessageHead>
              <Fit w={tw}>{text}</Fit>
            </Message>
          ))}
        </MessageList>
        <MessageThumb />
      </Messages>
      <Composer><Fit w={209}>Send a message to everyone</Fit><SendIcon /></Composer>
    </Panel>
  );
}

export default function App() {
  return (
    <Screen>
      <GlobalStyle />
      <BrowserChrome />
      <Meet>
        <MeetTop>
          <StageColumn>
            <Presenter><PresenterAvatar>L</PresenterAvatar><Fit w={338} ml={20}>(FU HCM) Lê Thị Minh Loan is presenting</Fit></Presenter>
            <Slide>
              <ExamScreen />
              <ReactionPill>
                <svg width="27" height="27" viewBox="0 0 27 27"><path d="M6 2h15v2h-2v8l3 4v2h-7v8h-3v-8H5v-2l3-4V4H6z" fill="currentColor" /><path d="M1 3l23 23" stroke="#59626b" strokeWidth="5" /><path d="M1 3l23 23" stroke="#dde2e6" strokeWidth="2.400" /></svg>
                <Faded><MdVolumeOff size={29} /></Faded>
                <Faded><MdRemoveCircleOutline size={31} /></Faded>
              </ReactionPill>
            </Slide>
          </StageColumn>
          <ChatPanel />
        </MeetTop>
        <CallBar>
          <Clock><Fit w={47}>18:28</Fit><ClockSep /><Fit w={137} ml={15}>hpn-jbnq-vmp</Fit></Clock>
          <Controls>
            <Round $bg="#ea4335"><MdMicOff size={25} /></Round>
            <Round $bg="#6d2b28">
              <MdOutlineVideocamOff size={25} color="#8d6f6e" />
              <Alert><svg width="4" height="14" viewBox="0 0 4 14"><path d="M2 0v8.500M2 11v2.500" stroke="#fff" strokeWidth="2.200" /></svg></Alert>
            </Round>
            <Round><MdOutlineClosedCaption size={30} /></Round>
            <Round><MdOutlineBackHand size={30} /></Round>
            <Round><svg width="29" height="24" viewBox="0 0 29 24"><rect x="1.500" y="1.500" width="26" height="21" rx="2" fill="none" stroke="#fff" strokeWidth="2.600" /><path d="M14.500 17V10" stroke="#fff" strokeWidth="3" /><path d="M9.500 12.300l5-5.300 5 5.300z" fill="#fff" /></svg></Round>
            <Round><MdMoreVert size={30} /></Round>
            <Round $w={70} $bg="#ea4335"><MdCallEnd size={31} /></Round>
          </Controls>
          <SideActions>
            <SideAction><MdInfoOutline size={31} /></SideAction>
            <SideAction><MdOutlinePeopleAlt size={30} /><Count>14</Count></SideAction>
            <SideAction $c="#8ab4f8"><MdChatBubble size={30} /></SideAction>
            <SideAction><MdOutlineCategory size={30} /></SideAction>
          </SideActions>
        </CallBar>
        <Toast><Fit w={388}>Dao Quoc Trung (K15 HCM) has left the meeting</Fit></Toast>
        <SelfView>
          <SelfMic><MdMicOff size={20} /></SelfMic>
          <SelfCam><MdOutlineVideocamOff size={30} /></SelfCam>
          <Fit w={31}>You</Fit>
          <Expand><MdOpenInFull size={24} /></Expand>
        </SelfView>
        <Cursor><svg width="14" height="21" viewBox="0 0 14 21"><path d="M1 1v15.500l3.500-3 2.600 5.500 2.400-1-2.500-5.500H12z" fill="#fff" stroke="#444" /></svg></Cursor>
      </Meet>
      <Taskbar>
        <Weather><Cloud /><TwoLines><Fit w={29}>79°F</Fit><Fit w={47} color="#5c5662">Cloudy</Fit></TwoLines></Weather>
        <Apps>
          {apps.map((a, i) => (
            <AppSlot key={i}>
              <AppTile $on={a.on}>{a.icon}{a.on && <AppBadge>T</AppBadge>}</AppTile>
              {a.run && <Running $on={a.on} />}
            </AppSlot>
          ))}
        </Apps>
        <Tray>
          <TrayItem $w={30}><svg width="17" height="9" viewBox="0 0 17 9"><path d="M.7 8.300l7.800-7.500 7.800 7.500" fill="none" stroke="#222" strokeWidth="1.300" /></svg></TrayItem>
          <TrayItem $w={31}><svg width="21" height="19" viewBox="0 0 21 19"><path d="M4.500 14A4 4 0 0 1 4 6.500a6.500 6.500 0 0 1 12-1.500 4.500 4.500 0 0 1 3.500 5L15 14z" fill="#8b8b8b" stroke="#333" /><path d="M1.500 11c1.500-3.500 6-4.500 9-1.500L9 13.500H4z" fill="#d8d8d8" /><circle cx="15" cy="13" r="5.700" fill="#d9202a" /><path d="M11.800 13h6.400" stroke="#fff" strokeWidth="1.500" /></svg></TrayItem>
          <TrayItem $w={30}><svg width="15" height="20" viewBox="0 0 15 20" fill="none" stroke="#1b57a6" strokeWidth="1.500"><rect x="4.500" y="1" width="6" height="11.500" rx="3" /><path d="M1 9c0 9 13 9 13 0M7.500 16v4" /></svg></TrayItem>
          <Fit w={28} ml={19}>ENG</Fit>
          <TrayItem $w={18} />
          <TrayItem $w={30}><svg width="20" height="16" viewBox="0 0 20 16" fill="none" strokeLinecap="round"><path d="M1 6a12.500 12.500 0 0 1 18 0M4 9a8.500 8.500 0 0 1 12 0" stroke="#a69fac" strokeWidth="1.300" /><path d="M6.800 11.500a4.500 4.500 0 0 1 6.400 0" stroke="#222" strokeWidth="1.500" /><circle cx="10" cy="13.800" r="1.800" fill="#222" /></svg></TrayItem>
          <TrayItem $w={28}><svg width="21" height="16" viewBox="0 0 21 16" fill="none" stroke="#222" strokeWidth="1.200"><path d="M1 5.500h3.500L9 1.500v13l-4.500-4H1zM11.500 5a4 4 0 0 1 0 6M14 3a7 7 0 0 1 0 10" /><path d="M17 1a10 10 0 0 1 0 14" stroke="#b5adbb" /></svg></TrayItem>
          <TrayItem $w={32}><svg width="20" height="16" viewBox="0 0 20 16"><rect x="5" y="4" width="12.500" height="10.500" rx="2" fill="none" stroke="#111" strokeWidth="1.300" /><rect x="7" y="6" width="8.500" height="6.500" fill="#111" /><path d="M18.500 7.500v3.500M2 0v3M5 0v3M3.500 7v8" stroke="#111" strokeWidth="1.500" /><path d="M.5 3h6v3l-2 2h-2l-2-2z" fill="#111" /></svg></TrayItem>
          <TrayItem $w={12} />
          <TwoLines $align="flex-end"><Fit w={54}>6:28 pm</Fit><Fit w={67}>12/9/2022</Fit></TwoLines>
          <NotifyCount>13</NotifyCount>
        </Tray>
      </Taskbar>
    </Screen>
  );
}
